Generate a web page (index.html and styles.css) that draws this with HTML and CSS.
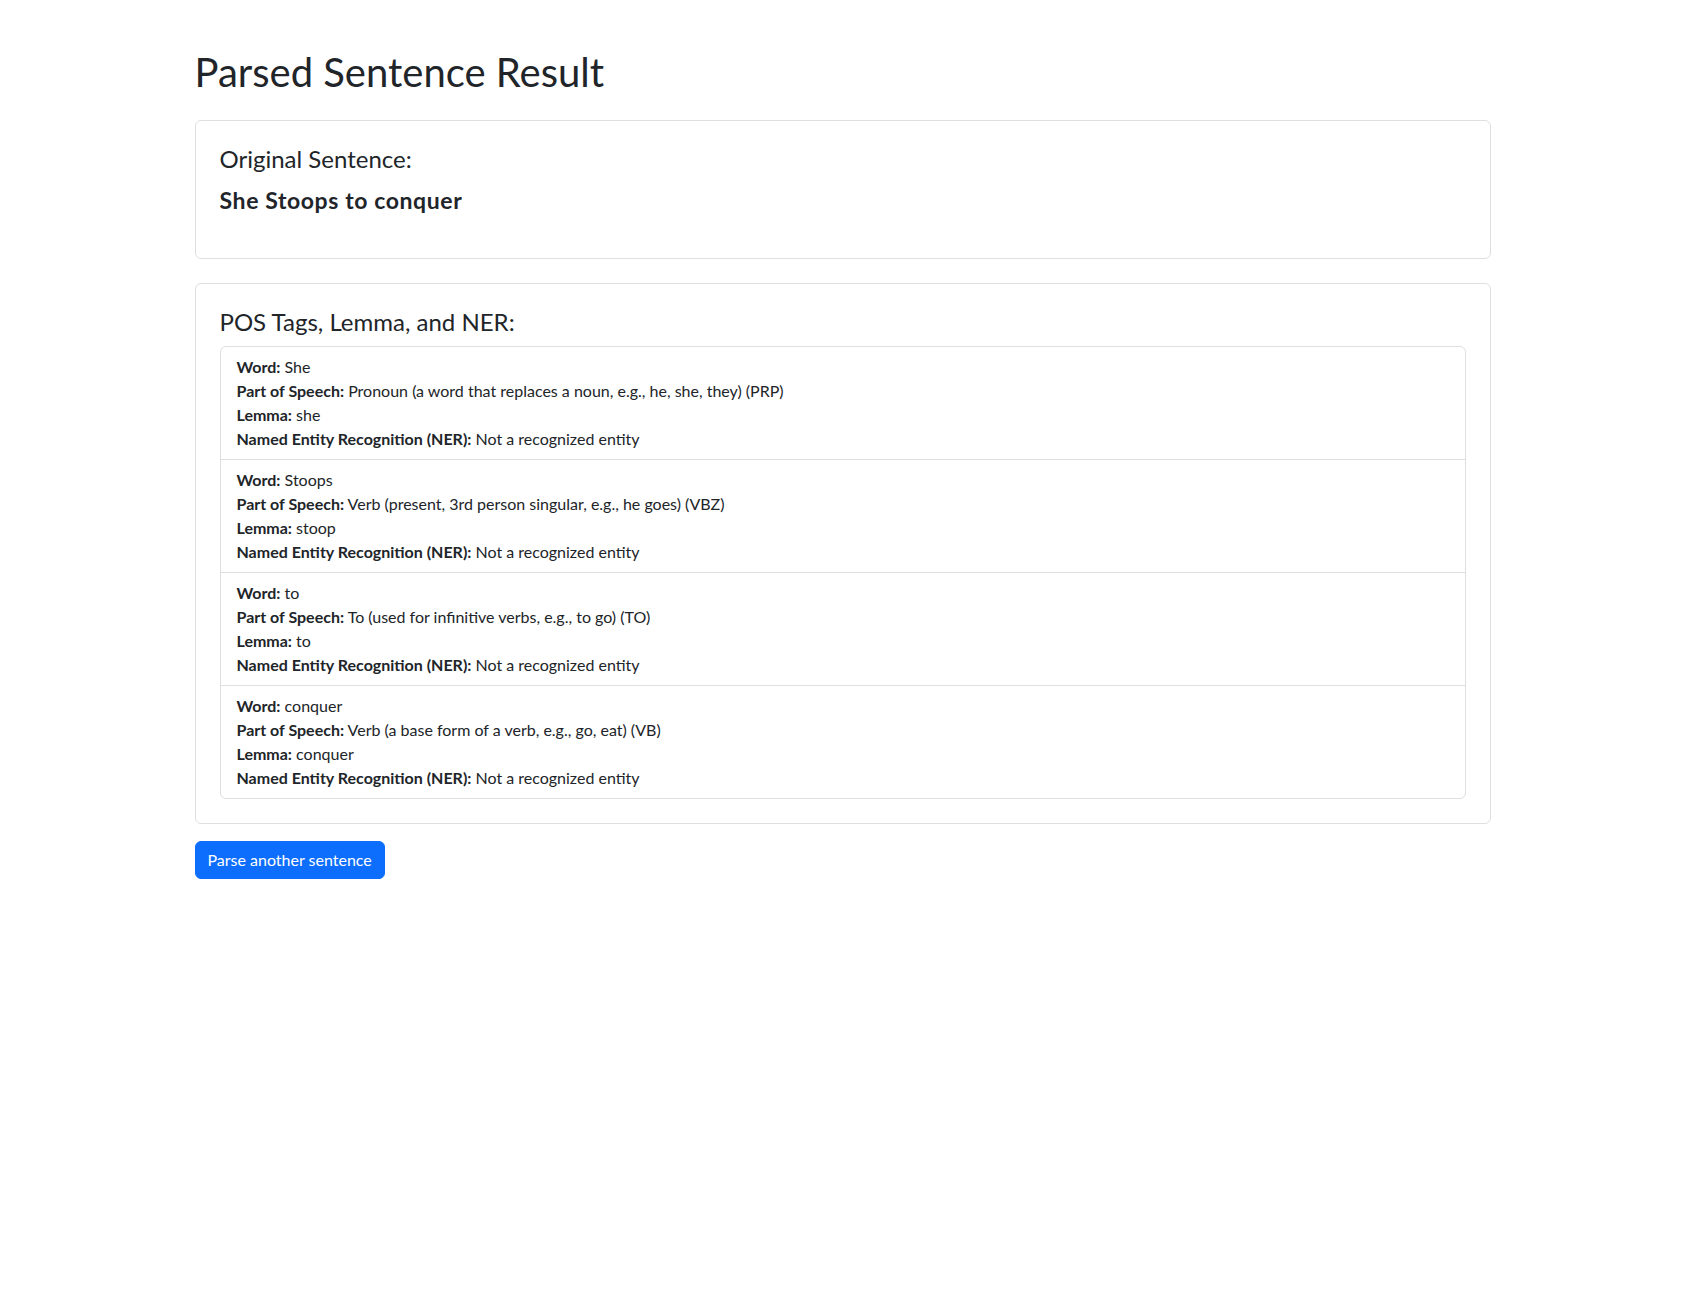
FILE: index.html
```html
<!DOCTYPE html>
<html lang="en">
<head>
<meta charset="utf-8">
<title>Parsed Sentence Result</title>
<link rel="stylesheet" href="styles.css">
</head>
<body>
<div class="container">
  <h1 class="title">Parsed Sentence Result</h1>

  <div class="card">
    <div class="card-body">
      <h4 class="card-heading">Original Sentence:</h4>
      <p class="sentence">She Stoops to conquer</p>
    </div>
  </div>

  <div class="card">
    <div class="card-body">
      <h4 class="card-heading">POS Tags, Lemma, and NER:</h4>
      <ul class="list-group">
        <li class="list-item">
          <div><strong>Word:</strong> She</div>
          <div><strong>Part of Speech:</strong> Pronoun (a word that replaces a noun, e.g., he, she, they) (PRP)</div>
          <div><strong>Lemma:</strong> she</div>
          <div><strong>Named Entity Recognition (NER):</strong> Not a recognized entity</div>
        </li>
        <li class="list-item">
          <div><strong>Word:</strong> Stoops</div>
          <div><strong>Part of Speech:</strong> Verb (present, 3rd person singular, e.g., he goes) (VBZ)</div>
          <div><strong>Lemma:</strong> stoop</div>
          <div><strong>Named Entity Recognition (NER):</strong> Not a recognized entity</div>
        </li>
        <li class="list-item">
          <div><strong>Word:</strong> to</div>
          <div><strong>Part of Speech:</strong> To (used for infinitive verbs, e.g., to go) (TO)</div>
          <div><strong>Lemma:</strong> to</div>
          <div><strong>Named Entity Recognition (NER):</strong> Not a recognized entity</div>
        </li>
        <li class="list-item">
          <div><strong>Word:</strong> conquer</div>
          <div><strong>Part of Speech:</strong> Verb (a base form of a verb, e.g., go, eat) (VB)</div>
          <div><strong>Lemma:</strong> conquer</div>
          <div><strong>Named Entity Recognition (NER):</strong> Not a recognized entity</div>
        </li>
      </ul>
    </div>
  </div>

  <a class="btn" href="#">Parse another sentence</a>
</div>
</body>
</html>
```
FILE: styles.css
```css
* { box-sizing: border-box; }
body {
  margin: 0;
  font-family: Lato, "Noto Sans", sans-serif;
  font-size: 16px;
  line-height: 24px;
  color: #212529;
  background: #fff;
}
.container {
  max-width: 1320px;
  margin: 48px auto 0;
  padding: 0 12px;
}
.title {
  font-size: 40px;
  line-height: 48px;
  font-weight: 400;
  margin: 0 0 24px;
}
.card {
  border: 1px solid #dedfe0;
  border-radius: 6px;
  margin-bottom: 24px;
  background: #fff;
}
.card-body {
  padding: 24px;
}
.card-heading {
  font-size: 24px;
  line-height: 28.8px;
  font-weight: 400;
  margin: 0 0 9px;
}
.sentence {
  font-size: 23px;
  line-height: 35px;
  font-weight: 700;
  letter-spacing: 0.6px;
  margin: 0 0 16px;
}
.list-group {
  list-style: none;
  margin: 0;
  padding: 0;
  border: 1px solid #dedfe0;
  border-radius: 6px;
}
.list-item {
  padding: 8px 16px;
  border-top: 1px solid #dedfe0;
}
.list-item:first-child { border-top: 0; }
.list-item strong { font-weight: 700; }
.btn {
  display: inline-block;
  margin-top: -9px;
  padding: 6px 12px;
  border: 1px solid #0d6efd;
  border-radius: 6px;
  background: #0d6efd;
  color: #fff;
  text-decoration: none;
  font-size: 16px;
  line-height: 24px;
}
```
